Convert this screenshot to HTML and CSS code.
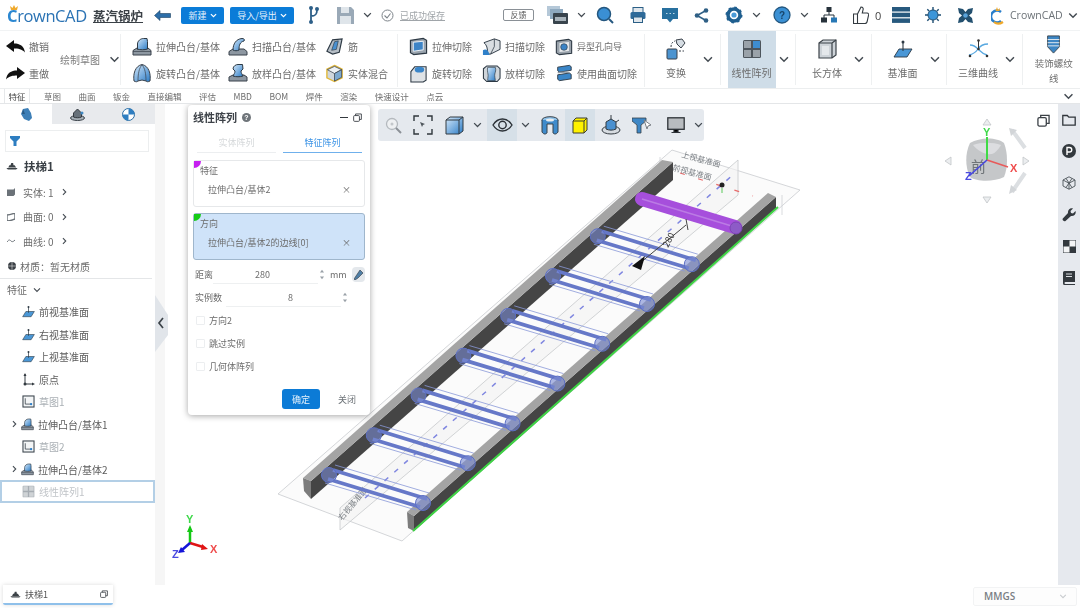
FILE: index.html
```html
<!DOCTYPE html>
<html lang="zh-CN">
<head>
<meta charset="utf-8">
<title>CrownCAD</title>
<link rel="stylesheet" href="styles.css">
</head>
<body>
<svg class="defs" width="0" height="0" aria-hidden="true">
  <defs>
    <linearGradient id="gb" x1="0" y1="0" x2="1" y2="1"><stop offset="0" stop-color="#d5e9fb"/><stop offset="1" stop-color="#2c7cc6"/></linearGradient>
    <symbol id="chev" viewBox="0 0 12 8"><path d="M1.500 1.500 6 6l4.500-4.500" fill="none" stroke="#444b52" stroke-width="1.700"/></symbol>
    <symbol id="chevr" viewBox="0 0 8 12"><path d="M1.500 1.500 6 6l-4.500 4.500" fill="none" stroke="#444b52" stroke-width="1.700"/></symbol>
    <symbol id="i-boss" viewBox="0 0 20 20"><path d="M1 13.500 5 11h11l3 2.500V18H1z" fill="#8d97a1" stroke="#39414a"/><path d="M1 14.500h18" stroke="#39414a" stroke-width=".7"/><path d="M5.500 12V7c0-3 3-5.500 6-5.500h3.500l.5 3V12c-3 1-7 1-10.500 0z" fill="url(#gb)" stroke="#2d3944"/></symbol>
    <symbol id="i-sweep" viewBox="0 0 20 20"><path d="M1 14.500 5 12h11l3 2.500V18H1z" fill="#8d97a1" stroke="#39414a"/><path d="M5 13c0-6 3-11 9-11.500 2 0 3 1 2 2.500-4 1-5 4-5 9-2 1-4 1-6 0z" fill="url(#gb)" stroke="#2d3944"/></symbol>
    <symbol id="i-rib" viewBox="0 0 20 20"><path d="M2 15 8 3l10-1-3 14-7 2z" fill="#b6bec6" stroke="#2d3944" stroke-width="1.200"/><path d="M7 14l3-9 4-1-2 9z" fill="#4a90d0" stroke="#2d3944" stroke-width=".7"/></symbol>
    <symbol id="i-rev" viewBox="0 0 20 20"><path d="M2 18C1 11 3 3 10 1.500 17 3 19 11 18 18c-2 1-3 1-4 0l-4-1-4 1c-1 1-2 1-4 0z" fill="url(#gb)" stroke="#39414a"/><path d="M6 18C6 11 7 5 10 2c3 3 4 9 4 16" fill="none" stroke="#39414a" stroke-width=".7"/></symbol>
    <symbol id="i-loft" viewBox="0 0 20 20"><path d="M1 14 5 12h11l3 2v4H1z" fill="#8d97a1" stroke="#39414a"/><path d="M5 13c1-2 2-3 2-5L5 6c0-3 3-4.500 5-4.500h4.500L15 6l-2 2c0 2 1 3 2 5-3 1-7 1-10 0z" fill="url(#gb)" stroke="#2d3944"/></symbol>
    <symbol id="i-blend" viewBox="0 0 20 20"><path d="M10 1.500 18 5.500v9L10 18.500 2 14.500v-9z" fill="#cfd6dc" stroke="#e2b93b" stroke-width="1.500"/><path d="M10 10 2.500 6 10 2.500 17.500 6z" fill="#eef2f5" stroke="#39414a" stroke-width=".8"/><path d="M10 10v8l7.500-4V6z" fill="#7da9cf" stroke="#39414a" stroke-width=".8"/></symbol>
    <symbol id="i-cut" viewBox="0 0 20 20"><path d="M1.500 3.500 15 1.500l3.500 2V17L5 18.500l-3.500-2z" fill="#9aa4ae" stroke="#2d3944" stroke-width="1.200"/><path d="M4.500 5.500 15 4.500v9l-10.500 1.500z" fill="#3d84c6" stroke="#fff" stroke-width=".9"/></symbol>
    <symbol id="i-scut" viewBox="0 0 20 20"><path d="M2 6 13 2l6 2v9L9 18H6C6 12 5 8 2 6z" fill="#d9dee2" stroke="#2d3944"/><path d="M13 2v8l-4 8" fill="none" stroke="#2d3944" stroke-width=".8"/><path d="M1 14c3-2 6 0 7 5H1z" fill="#2f80c9"/></symbol>
    <symbol id="i-rcut" viewBox="0 0 20 20"><path d="M2 8 6 3h12v14l-3 2H2z" fill="#dfe3e6" stroke="#2d3944" stroke-width="1.100"/><ellipse cx="11" cy="6" rx="5" ry="3" fill="#3b86c9"/></symbol>
    <symbol id="i-lcut" viewBox="0 0 20 20"><path d="M1.500 5 5 2h11l3 3v10l-3 3.500H5L1.500 15z" fill="#cfd5da" stroke="#2d3944" stroke-width="1.100"/><path d="M6 3.500h8c1 3 0 5-.5 7s.5 5 .5 7H6c0-3 .8-5 .3-7S5.500 6 6 3.500z" fill="url(#gb)" stroke="#2d3944" stroke-width=".7"/></symbol>
    <symbol id="i-hole" viewBox="0 0 20 20"><path d="M1.500 3.500 15 1.500l3.500 2V17L5 18.500l-3.500-2z" fill="#99a2ab" stroke="#2d3944" stroke-width="1.200"/><path d="M5 5.500 15.500 4.500v10L5 15.500z" fill="#e6e9ec"/><circle cx="10" cy="10" r="3.700" fill="#3a83c6" stroke="#2d3944" stroke-width=".7"/></symbol>
    <symbol id="i-scut2" viewBox="0 0 20 20"><path d="M3 3.500 16 1.500l2 1.500v4l-13 2-2-1.500z" fill="#3a86c8" stroke="#2d3944"/><path d="M3 12l13-2 2 1.500v5l-13 2L3 17z" fill="#3a86c8" stroke="#2d3944"/><path d="M3 9.500c4 0 9-1 13 0" stroke="#8d97a1" stroke-width="1.500" fill="none"/></symbol>
    <symbol id="i-plane" viewBox="0 0 20 20"><path d="M1 18 6 10h13l-5 8z" fill="#4a97d6" stroke="#2d3944" stroke-width=".9"/><path d="M10 12V3" stroke="#2d3944" stroke-width="1.100"/><circle cx="10" cy="3" r="1.500" fill="#2d3944"/></symbol>
    <symbol id="i-sketch" viewBox="0 0 20 20"><rect x="1.500" y="1.500" width="17" height="17" fill="#f3f5f6" stroke="#37414a" stroke-width="1.600"/><path d="M5 5v9h10" fill="none" stroke="#37414a" stroke-width="1.200"/><circle cx="14" cy="14" r="1.800" fill="#2f80c9"/></symbol>
    <symbol id="i-grid" viewBox="0 0 20 20"><rect x="1" y="1" width="18" height="18" rx="1.500" fill="#4d555c"/><path d="M2 2h7v7H2zM11 11h7v7h-7zM2 11h7v7H2z" fill="#9aa2a9"/><path d="M11 2h7v7h-7z" fill="#3e8dd0"/></symbol>
    <symbol id="i-grid2" viewBox="0 0 20 20"><rect x="1" y="1" width="18" height="18" rx="1.500" fill="#a6acb2"/><path d="M2 2h7v7H2zM11 11h7v7h-7zM2 11h7v7H2zM11 2h7v7h-7z" fill="#cfd3d6"/></symbol>
    <symbol id="i-ship" viewBox="0 0 16 10"><path d="M.5 7.500h15L13.500 9.500h-11zM3 7l1.500-3h7l2 3zM6 4l1-3h2.500l.5 3z" fill="#3c4247"/></symbol>
    <symbol id="i-copy" viewBox="0 0 14 14"><rect x="1" y="4" width="9" height="9" rx="1.500" fill="none" stroke="#3b4046" stroke-width="1.400"/><path d="M4 4V1.500h9V10h-3" fill="none" stroke="#3b4046" stroke-width="1.400"/></symbol>
    <symbol id="i-spin" viewBox="0 0 8 16"><path d="M4 1 7 5H1zM4 15 1 11h6z" fill="#9aa1a8"/></symbol>
    <g id="bar">
      <path d="M333 470 427 499M328 479 420 507" fill="none" stroke="#6678c8" stroke-width="3.800"/>
      <path d="M335 465 429 493M325 483 416 510" fill="none" stroke="#8a98d8" stroke-width="1" opacity=".8"/>
      <circle cx="329" cy="475" r="7.500" fill="#7a8bd2" fill-opacity=".6" stroke="#5c6fc4"/>
      <circle cx="423" cy="503" r="7.500" fill="#7a8bd2" fill-opacity=".6" stroke="#5c6fc4"/>
    </g>
  </defs>
</svg>

<header class="topbar">
  <div class="logo"><span class="logo-c">C</span>rownCAD<svg class="crown" width="8" height="6" viewBox="0 0 8 6"><path d="M1 5 0 1l2.500 2L4 0l1.500 3L8 1 7 5z" fill="#efa92c"/></svg></div>
  <span class="doc-title ml9">蒸汽锅炉</span>
  <svg class="ml11" width="17" height="11" viewBox="0 0 17 11"><path d="M6 0.500 0.500 5.500 6 10.500V7.500h10.500v-4H6z" fill="#2d6ea8" stroke="#1c3f5f" stroke-width=".6"/></svg>
  <button class="btn-blue w43 ml10">新建<svg class="chev-w" width="7" height="5" viewBox="0 0 12 8"><path d="M1.500 1.500 6 6l4.500-4.500" fill="none" stroke="#fff" stroke-width="2"/></svg></button>
  <button class="btn-blue w64 ml6">导入/导出<svg class="chev-w" width="7" height="5" viewBox="0 0 12 8"><path d="M1.500 1.500 6 6l4.500-4.500" fill="none" stroke="#fff" stroke-width="2"/></svg></button>
  <svg class="ml14" width="12" height="20" viewBox="0 0 12 20"><path d="M3 3v14M3 11c5 0 6-2 6-6" fill="none" stroke="#2d5f88" stroke-width="1.800"/><circle cx="3" cy="3" r="2" fill="#2d5f88"/><circle cx="9" cy="4" r="2" fill="#2d5f88"/><circle cx="3" cy="17" r="2" fill="#2d5f88"/></svg>
  <svg class="ml17" width="17" height="17" viewBox="0 0 17 17"><path d="M0 0h14l3 3v14H0z" fill="#9aa9b7"/><path d="M4 0h8v6H4z" fill="#dfe5ea"/><path d="M3 9h11v8H3z" fill="#dfe5ea"/></svg>
  <svg class="ml9" width="9" height="6"><use href="#chev"/></svg>
  <svg class="ml9" width="13" height="13" viewBox="0 0 13 13"><circle cx="6.500" cy="6.500" r="5.500" fill="none" stroke="#7b8288"/><path d="M3.500 6.500 6 9l3.500-4.500" fill="none" stroke="#7b8288" stroke-width="1.100"/></svg>
  <span class="saved ml6">已成功保存</span>
  <span class="feedback ml59">反馈</span>
  <svg class="ml13" width="21" height="19" viewBox="0 0 21 19"><rect x="0" y="0" width="13" height="10" fill="#b5c8d8"/><rect x="3" y="3" width="13" height="10" fill="#8ea9bf"/><rect x="6" y="7" width="15" height="11" rx="1" fill="#39444d"/><rect x="8" y="11" width="11" height="4" fill="#a8b3bb"/></svg>
  <svg class="ml9" width="9" height="6"><use href="#chev"/></svg>
  <svg class="ml10" width="18" height="18" viewBox="0 0 18 18"><circle cx="8" cy="8" r="6.500" fill="#3a8fd4" stroke="#24577f" stroke-width="1.500"/><path d="m13 13 4 4" stroke="#24577f" stroke-width="2"/></svg>
  <svg class="ml16" width="16" height="16" viewBox="0 0 16 16"><rect x="3" y="0.500" width="10" height="5" fill="#dfe6ec" stroke="#2b5f86"/><rect x="0.500" y="5" width="15" height="7" rx="1.500" fill="#2e6a99"/><rect x="3.500" y="10" width="9" height="5.500" fill="#dfe6ec" stroke="#2b5f86"/></svg>
  <svg class="ml16" width="16" height="15" viewBox="0 0 16 15"><rect x="0" y="0" width="16" height="11" fill="#27709f"/><path d="M5 11h6l-3 3.500z" fill="#27709f"/><path d="M4 5.500h1.500M7.500 5.500H9M11 5.500h1.500" stroke="#bcd7e7" stroke-width="1.200"/></svg>
  <svg class="ml16" width="15" height="15" viewBox="0 0 15 15"><path d="M12 2.500 3 7.500l9 5" fill="none" stroke="#2f5f85" stroke-width="1.500"/><circle cx="12" cy="2.500" r="2.300" fill="#2f5f85"/><circle cx="3" cy="7.500" r="2.300" fill="#2f5f85"/><circle cx="12" cy="12.500" r="2.300" fill="#2f5f85"/></svg>
  <svg class="ml16" width="18" height="18" viewBox="0 0 18 18"><circle cx="9" cy="9" r="6" fill="none" stroke="#1f5f8f" stroke-width="3.500"/><circle cx="9" cy="9" r="2.600" fill="#4a9bd8"/><circle cx="9" cy="9" r="7.500" fill="none" stroke="#1f5f8f" stroke-width="2" stroke-dasharray="2.500 3.400"/></svg>
  <svg class="ml9" width="9" height="6"><use href="#chev"/></svg>
  <svg class="ml12" width="18" height="18" viewBox="0 0 18 18"><circle cx="9" cy="9" r="8" fill="#3b90d4" stroke="#24577f" stroke-width="1.300"/></svg>
  <span class="help-q">?</span>
  <svg class="ml9" width="9" height="6"><use href="#chev"/></svg>
  <svg class="ml12" width="16" height="16" viewBox="0 0 16 16"><rect x="5.500" y="0" width="5" height="5" fill="#27323b"/><path d="M8 5v3M3 11V8h10v3" fill="none" stroke="#27323b"/><rect x="0" y="10.500" width="6" height="5" fill="#27323b"/><rect x="10" y="10.500" width="6" height="5" fill="#2878b5"/></svg>
  <svg class="ml16" width="16" height="18" viewBox="0 0 16 18"><path d="M4.500 8 8 1c2 0 2.500 1.500 2 3l-.7 3h4.700c1.500 0 2 1.500 1.500 2.500L14 16c-.3 1-1 1.500-2 1.500H4.500zM.5 8h4v9.500h-4z" fill="#fff" stroke="#333a40" stroke-width="1.100"/></svg>
  <span class="likes">0</span>
  <svg class="ml12" width="18" height="16" viewBox="0 0 18 16"><rect width="18" height="4.500" fill="#27597e"/><rect y="5.700" width="18" height="4.500" fill="#27597e"/><rect y="11.400" width="18" height="4.500" fill="#27597e"/></svg>
  <svg class="ml15" width="16" height="16" viewBox="0 0 16 16"><circle cx="8" cy="8" r="5" fill="#3d96d9" stroke="#1f4f73"/><path d="M8 0v3M8 13v3M0 8h3M13 8h3M2.300 2.300l2 2M11.700 11.700l2 2M2.300 13.700l2-2M11.700 4.300l2-2" stroke="#1f4f73" stroke-width="1.400"/></svg>
  <svg class="ml16" width="17" height="17" viewBox="0 0 17 17"><path d="M1 1l5 1 2.500 3L11 2l5-1-1 5-3 2.500 3 2.500 1 5-5-1-2.500-3L6 15l-5 1 1-5 3-2.500L2 6z" fill="#23506f"/><circle cx="8.500" cy="8.500" r="2.300" fill="#5aa4db"/></svg>
  <svg class="ml17" width="13" height="19" viewBox="0 0 13 19"><path d="M10 6A6 6 0 1 0 10 15" fill="none" stroke="#2a7fcb" stroke-width="2.400"/><path d="M3 16c3 2.500 6 2 9 0" fill="none" stroke="#f0a92b" stroke-width="2.200"/><path d="m6 1 1 3 2-2-.5 3L4.500 5z" fill="#f0a92b"/></svg>
  <span class="brand">CrownCAD</span>
  <svg class="ml6" width="10" height="7"><use href="#chev"/></svg>
</header>

<section class="ribbon">
  <div class="rb-undo">
    <div class="cmd"><svg width="19" height="13" viewBox="0 0 19 13"><path d="M8 0 0 6l8 6V8.500c4 0 8 .5 11 4C18 6 14 3.500 8 3.500z" fill="#111"/></svg><span>撤销</span></div>
    <div class="cmd"><svg width="19" height="13" viewBox="0 0 19 13"><path d="M11 0l8 6-8 6V8.500c-4 0-8 .5-11 4C1 6 5 3.500 11 3.500z" fill="#111"/></svg><span>重做</span></div>
  </div>
  <div class="rb-sketch"><span>绘制草图</span><svg width="11" height="7"><use href="#chev"/></svg></div>
  <div class="rb-grid rb-feat">
    <div class="cmd"><svg width="20" height="20"><use href="#i-boss"/></svg><span>拉伸凸台/基体</span></div>
    <div class="cmd"><svg width="20" height="20"><use href="#i-sweep"/></svg><span>扫描凸台/基体</span></div>
    <div class="cmd"><svg width="19" height="19"><use href="#i-rib"/></svg><span>筋</span></div>
    <div class="cmd"><svg width="20" height="20"><use href="#i-rev"/></svg><span>旋转凸台/基体</span></div>
    <div class="cmd"><svg width="20" height="20"><use href="#i-loft"/></svg><span>放样凸台/基体</span></div>
    <div class="cmd"><svg width="19" height="19"><use href="#i-blend"/></svg><span>实体混合</span></div>
  </div>
  <div class="rb-grid rb-cut">
    <div class="cmd"><svg width="19" height="19"><use href="#i-cut"/></svg><span>拉伸切除</span></div>
    <div class="cmd"><svg width="19" height="19"><use href="#i-scut"/></svg><span>扫描切除</span></div>
    <div class="cmd"><svg width="18" height="18"><use href="#i-hole"/></svg><span class="small">异型孔向导</span></div>
    <div class="cmd"><svg width="19" height="19"><use href="#i-rcut"/></svg><span>旋转切除</span></div>
    <div class="cmd"><svg width="19" height="19"><use href="#i-lcut"/></svg><span>放样切除</span></div>
    <div class="cmd"><svg width="18" height="18"><use href="#i-scut2"/></svg><span>使用曲面切除</span></div>
  </div>
  <div class="rb-big">
    <div class="big-cmd">
      <svg class="big-ico" width="20" height="22" viewBox="0 0 20 22"><path d="M10 2 16 1l3 4-4 5-4-4z" fill="#d6dde3" stroke="#39414a"/><rect x="1" y="11" width="10" height="10" rx="1" fill="#4c94d0" stroke="#39414a"/><path d="M5 9c0-3 1-5 4-6M13 13h5" fill="none" stroke="#39414a" stroke-dasharray="2 1.500"/></svg>
      <span>变换</span>
    </div>
    <svg class="big-chev" width="12" height="7"><use href="#chev"/></svg>
  </div>
  <div class="rb-big">
    <div class="big-cmd active">
      <svg class="big-ico" width="20" height="20"><use href="#i-grid"/></svg>
      <span>线性阵列</span>
    </div>
    <svg class="big-chev" width="12" height="7"><use href="#chev"/></svg>
  </div>
  <div class="rb-big">
    <div class="big-cmd">
      <svg class="big-ico" width="19" height="20" viewBox="0 0 19 20"><path d="M1 4 5 1h13v15l-4 3H1z" fill="#cdd3d8" stroke="#3b4248" stroke-width="1.200"/><path d="M1 4h13v15M14 4l4-3" fill="none" stroke="#3b4248" stroke-width="1.200"/><rect x="4" y="7" width="7" height="9" fill="#e4e8eb"/></svg>
      <span>长方体</span>
    </div>
    <svg class="big-chev" width="12" height="7"><use href="#chev"/></svg>
  </div>
  <div class="rb-big">
    <div class="big-cmd">
      <svg class="big-ico" width="20" height="20"><use href="#i-plane"/></svg>
      <span>基准面</span>
    </div>
    <svg class="big-chev" width="12" height="7"><use href="#chev"/></svg>
  </div>
  <div class="rb-big">
    <div class="big-cmd">
      <svg class="big-ico" width="21" height="20" viewBox="0 0 21 20"><path d="M1 16c5-1 7-3 9-6s5-5 10-5M2 6c5 0 7 3 9 5s4 4 8 5" fill="none" stroke="#58a8e0" stroke-width="1.300"/><path d="M10.500 1v9" stroke="#333"/><circle cx="10.500" cy="1.500" r="1.300" fill="#333"/><circle cx="2" cy="17" r="1.300" fill="#333"/><circle cx="19" cy="17" r="1.300" fill="#333"/><circle cx="10.500" cy="10" r="1.300" fill="#333"/></svg>
      <span>三维曲线</span>
    </div>
    <svg class="big-chev" width="12" height="7"><use href="#chev"/></svg>
  </div>
  <div class="rb-thread">
    <svg width="15" height="19" viewBox="0 0 15 21"><path d="M1 1h13v12l-6.500 7L1 13z" fill="#3d86c4" stroke="#37424b"/><path d="M1 5h13M1 8.500h13M1 12h13" stroke="#dfe8ef" stroke-width="1.100"/></svg>
    <span>装饰螺纹线</span>
  </div>
</section>

<nav class="tabs">
  <span class="tab on">特征</span><span class="tab">草图</span><span class="tab">曲面</span><span class="tab">钣金</span><span class="tab">直接编辑</span><span class="tab">评估</span><span class="tab">MBD</span><span class="tab">BOM</span><span class="tab">焊件</span><span class="tab">渲染</span><span class="tab">快速设计</span><span class="tab">点云</span>
  <svg class="tabs-more" width="11" height="7"><use href="#chev"/></svg>
</nav>

<main class="work">
  <aside class="panel">
    <div class="panel-tabs">
      <span class="ptab on"><svg width="13" height="13" viewBox="0 0 13 13"><path d="M3 1 8 0l3 5 1 5-3 3-5-2-3-5z" fill="#3d7fb7"/><path d="M3 1l2 5-3 0z" fill="#2a5b85"/></svg></span>
      <span class="ptab"><svg width="15" height="14" viewBox="0 0 15 14"><ellipse cx="7.500" cy="11" rx="7" ry="2.500" fill="#a8b1b8" stroke="#3d444b"/><path d="M3.500 10V6l4-4 4 4v4c-2 1-6 1-8 0z" fill="#67717a" stroke="#33393f"/><circle cx="12" cy="6" r="1.500" fill="#3f87c1"/></svg></span>
      <span class="ptab"><svg width="13" height="13" viewBox="0 0 13 13"><circle cx="6.500" cy="6.500" r="6" fill="#fff" stroke="#2b6ea5"/><path d="M6.500 .5a6 6 0 0 1 6 6h-6zM6.500 12.500a6 6 0 0 1-6-6h6z" fill="#2e7ec1"/></svg></span>
    </div>
    <div class="filter"><svg width="10" height="10" viewBox="0 0 10 10"><path d="M0 0h10v2L6.500 5.500V10h-3V5.500L0 2z" fill="#2e7ec1"/></svg></div>
    <div class="part-title"><svg width="12" height="8"><use href="#i-ship"/></svg><span>扶梯1</span></div>
    <div class="prop"><svg class="prop-ico" width="8" height="8" viewBox="0 0 8 8"><path d="M0 1.500h6.500L8 0v6.500L6.500 8H0z" fill="#6b7278"/></svg><span>实体: 1</span><svg class="prop-chev" width="5" height="8"><use href="#chevr"/></svg></div>
    <div class="prop"><svg class="prop-ico" width="8" height="8" viewBox="0 0 8 8"><path d="M0 2c3 0 5-1 8-2v6c-3 1-5 2-8 2z" fill="none" stroke="#6b7278" stroke-width="1.400"/></svg><span>曲面: 0</span><svg class="prop-chev" width="5" height="8"><use href="#chevr"/></svg></div>
    <div class="prop"><svg class="prop-ico" width="8" height="8" viewBox="0 0 8 8"><path d="M0 5c2-3 3-2 4-1s2 1 4-1" fill="none" stroke="#6b7278"/></svg><span>曲线: 0</span><svg class="prop-chev" width="5" height="8"><use href="#chevr"/></svg></div>
    <div class="prop prop-last"><svg class="mat-ico" width="8" height="8" viewBox="0 0 8 8"><circle cx="4" cy="4" r="4" fill="#3b4046"/><path d="M0 4h8M4 0v8" stroke="#fff" stroke-width=".5"/></svg><span>材质：暂无材质</span></div>
    <div class="section-head"><span>特征</span><svg width="8" height="6"><use href="#chev"/></svg></div>
    <ul class="tree">
      <li class="node"><svg width="13" height="13"><use href="#i-plane"/></svg><span>前视基准面</span></li>
      <li class="node"><svg width="13" height="13"><use href="#i-plane"/></svg><span>右视基准面</span></li>
      <li class="node"><svg width="13" height="13"><use href="#i-plane"/></svg><span>上视基准面</span></li>
      <li class="node"><svg width="13" height="13" viewBox="0 0 13 13"><path d="M3 1v10h8" fill="none" stroke="#333a40"/><path d="M3 0 1.500 3h3zM13 11l-3-1.500v3z" fill="#333a40"/><circle cx="3" cy="11" r="1.500" fill="#333a40"/></svg><span>原点</span></li>
      <li class="node dim"><svg width="13" height="13"><use href="#i-sketch"/></svg><span>草图1</span></li>
      <li class="node open"><svg class="twisty" width="5" height="8"><use href="#chevr"/></svg><svg width="13" height="13"><use href="#i-boss"/></svg><span>拉伸凸台/基体1</span></li>
      <li class="node dim"><svg width="13" height="13"><use href="#i-sketch"/></svg><span>草图2</span></li>
      <li class="node open"><svg class="twisty" width="5" height="8"><use href="#chevr"/></svg><svg width="13" height="13"><use href="#i-boss"/></svg><span>拉伸凸台/基体2</span></li>
      <li class="node selected"><svg width="13" height="13"><use href="#i-grid2"/></svg><span>线性阵列1</span></li>
    </ul>
  </aside>

  <div class="canvas">
    <svg class="scene" viewBox="155 104 903 481" width="903" height="481">
      <path d="M155 104h10v481h-10z" fill="#f6f6f6"/>
      <path d="M155 295 168 315V335L155 352z" fill="#e1e5ea"/>
      <path d="M163 318 159 323 163 328" fill="none" stroke="#3c4349" stroke-width="1.700"/>
      <!-- reference planes -->
      <path d="M278 494 402 541 800 190 672 150z" fill="#fbfbfb" stroke="#c9cccf" stroke-width=".8"/>
      <path d="M340 508V530L738 195V160z" fill="#f4f4f4" fill-opacity=".6" stroke="#c6c9cc" stroke-width=".8"/>
      <path d="M660 157V185M782 195V215" stroke="#cfd2d5" stroke-width=".8"/>
      <!-- floor dashes -->
      <path d="M365 498 735 173" stroke="#7f86e0" stroke-width="1.500" stroke-dasharray="5 8"/>
      <path d="M680 173 753 196" stroke="#e86a6a" stroke-width="1.200" stroke-dasharray="5 14"/>
      <circle cx="722" cy="185" r="2.500" fill="#222"/>
      <path d="M722 188v5" stroke="#58c858"/>
      <text class="plane-label" transform="translate(681 157) rotate(15)">上视基准面</text>
      <text class="plane-label" transform="translate(672 170) rotate(15)">前视基准面</text>
      <text class="plane-label" transform="translate(342 521) rotate(-50)">右视基准面</text>
      <!-- left rail -->
      <path d="M311 481 673 162V180L311 499z" fill="#454545"/>
      <path d="M303 478 662 160 673 162 311 481z" fill="#a4a4a4"/>
      <path d="M303 478 311 481V499L304 491z" fill="#7c7c7c"/>
      <!-- right rail -->
      <path d="M414 516 776 197V209L414 531z" fill="#454545"/>
      <path d="M407 512 768 193 776 197 414 516z" fill="#a4a4a4"/>
      <path d="M407 512 414 516V531L408 528z" fill="#7c7c7c"/>
      <path d="M413 531 778 207" stroke="#3fd445" stroke-width="2"/>
      <!-- pattern bars -->
      <use href="#bar"/>
      <use href="#bar" x="44.800" y="-39.800"/>
      <use href="#bar" x="89.600" y="-79.600"/>
      <use href="#bar" x="134.400" y="-119.400"/>
      <use href="#bar" x="179.200" y="-159.200"/>
      <use href="#bar" x="224" y="-199"/>
      <use href="#bar" x="268.800" y="-238.800"/>
      <!-- seed bar -->
      <path d="M642 199 735 227" stroke="#a64fdc" stroke-width="14" stroke-linecap="round"/>
      <path d="M642 199 735 227" stroke="#bb7be4" stroke-width="1.500"/>
      <circle cx="736" cy="228" r="6" fill="#8d5bc7" stroke="#7c45b4"/>
      <!-- dimension -->
      <path d="M640 263 686 225M686 219 688 230" stroke="#444" fill="none"/>
      <path d="M632 266 645 256 641 270z" fill="#111"/>
      <text class="dim-label" transform="translate(668 248) rotate(-62)">280</text>
      <!-- view cube -->
      <path d="M1012 130 1025 148M1025 173 1012 192" stroke="#dcdfe2" stroke-width="4"/>
      <path d="M1009 128 1017 130 1011 136zM1009 194 1017 190 1011 185z" fill="#d2d5d8"/>
      <path d="M987 119 991 125H983zM987 203 983 197H991zM945 161 951 157V165zM1029 161 1023 157V165z" fill="#eceef0" stroke="#c2c5c8" stroke-width=".8"/>
      <path d="M970 143c10-6 27-6 34 0 4 10 4 25 0 34-10 5-27 5-34 0-5-10-5-24 0-34z" fill="#c5c7c9"/>
      <path d="M973 145c8-3 20-3 28 0-3 5-6 8-9 9-7 1-14-3-19-9z" fill="#dcdde0"/>
      <text class="cube-face" x="971" y="172">前</text>
      <path d="M987 160V137" stroke="#3fdb45" stroke-width="2"/>
      <path d="M987 160 1008 167" stroke="#e85a5a" stroke-width="1.500"/>
      <path d="M987 160 969 176" stroke="#4545e0" stroke-width="1.500"/>
      <text class="ax ax-y" x="983" y="136">Y</text>
      <text class="ax ax-x" x="1010" y="172">X</text>
      <text class="ax ax-z" x="965" y="180">Z</text>
      <!-- triad -->
      <path d="M190 543V529" stroke="#14c814" stroke-width="2.500"/><path d="M190 525 187 532H193z" fill="#14c814"/>
      <path d="M190 543 203 547" stroke="#e01414" stroke-width="2.500"/><path d="M208 549 202 544 201 550z" fill="#e01414"/>
      <path d="M190 543 182 550" stroke="#1414d8" stroke-width="2.500"/><path d="M178 553 181 547 185 552z" fill="#1414d8"/>
      <text class="ax ax-y" x="186" y="523">Y</text>
      <text class="ax ax-x" x="210" y="553">X</text>
      <text class="ax ax-z" x="172" y="558">Z</text>
    </svg>

    <svg class="restore" width="13" height="13"><use href="#i-copy"/></svg>

    <div class="viewbar">
      <span class="vb"><svg width="17" height="17" viewBox="0 0 17 17"><circle cx="7" cy="7" r="5.500" fill="#eef0f2" stroke="#b4b9be" stroke-width="1.300"/><path d="m11 11 5 5" stroke="#8c9197" stroke-width="2"/><circle cx="7" cy="7" r="1.500" fill="#c2c6ca"/></svg></span>
      <span class="vb vb-focus"><svg width="20" height="20" viewBox="0 0 20 20"><path d="M1 6V1h5M14 1h5v5M1 14v5h5M19 14v5h-5" fill="none" stroke="#30373d" stroke-width="1.400"/><path d="m7 7 5 2-2 1-1 2z" fill="#50575d"/></svg></span>
      <span class="vb vb-cube"><svg width="19" height="19" viewBox="0 0 19 19"><path d="M1 4 5 1h13v14l-4 3H1z" fill="url(#gb)" stroke="#323a41"/><path d="M1 4h13v14M14 4l4-3" fill="none" stroke="#323a41"/></svg></span>
      <svg class="vb-chev" width="9" height="6"><use href="#chev"/></svg>
      <span class="vb vb-on vb-eye"><svg width="21" height="14" viewBox="0 0 21 14"><path d="M1 7c5-8 14-8 19 0-5 8-14 8-19 0z" fill="none" stroke="#2a3036" stroke-width="1.400"/><circle cx="10.500" cy="7" r="3.700" fill="none" stroke="#2a3036" stroke-width="1.400"/></svg></span>
      <svg class="vb-chev vb-chev2" width="9" height="6"><use href="#chev"/></svg>
      <span class="vb vb-ring"><svg width="18" height="19" viewBox="0 0 18 19"><ellipse cx="9" cy="4" rx="8" ry="3.300" fill="#8cc0e8" stroke="#39424a"/><path d="M1 4v12c2 3 4 2 5 1V8h6v9c1 1 3 2 5-1V4" fill="#3f8bcb" stroke="#39424a"/><ellipse cx="9" cy="4" rx="4" ry="1.500" fill="#e6ebef"/></svg></span>
      <span class="vb vb-on vb-yellow"><svg width="16" height="17" viewBox="0 0 16 17"><path d="M1 4 4 1h11v12l-3 3H1z" fill="#fff200" stroke="#3c3f33"/><path d="M1 4h11v12M12 4l3-3" fill="none" stroke="#3c3f33"/></svg></span>
      <span class="vb vb-stage"><svg width="20" height="20" viewBox="0 0 20 20"><ellipse cx="10" cy="15" rx="9" ry="4" fill="#d6dbe0" stroke="#333a40"/><path d="M5 14V7l5-3 5 3v7c-3 1.500-7 1.500-10 0z" fill="#4a90cf" stroke="#333a40"/><path d="M10 4V0M15 7l3-2" stroke="#333a40"/></svg></span>
      <span class="vb vb-filter"><svg width="20" height="17" viewBox="0 0 20 17"><path d="M0 1h14v3L9 8v8H5V8L0 4z" fill="#3d87c6" stroke="#39424a" stroke-width=".8"/><path d="M12 3 19 8 16 9 15 12z" fill="#fff" stroke="#7b8086"/></svg></span>
      <span class="vb vb-monitor"><svg width="18" height="17" viewBox="0 0 18 17"><rect x="0.800" y="0.800" width="16.400" height="11.500" fill="#b8bcc0" stroke="#2d3237" stroke-width="1.300"/><path d="M7 12.500h4V15H7zM4.500 15.500h9" stroke="#2d3237" stroke-width="1.200"/></svg></span>
      <svg class="vb-chev" width="9" height="6"><use href="#chev"/></svg>
    </div>

    <div class="dialog">
      <div class="dlg-head">
        <h2>线性阵列</h2><span class="dlg-help">?</span>
        <span class="dlg-min"></span>
        <svg width="9" height="9"><use href="#i-copy"/></svg>
      </div>
      <div class="dlg-tabs"><span class="dtab">实体阵列</span><span class="dtab on">特征阵列</span></div>
      <div class="pick pick-feat"><label>特征</label><div class="pick-val"><span>拉伸凸台/基体2</span><i>×</i></div></div>
      <div class="pick pick-dir"><label>方向</label><div class="pick-val"><span>拉伸凸台/基体2的边线[0]</span><i>×</i></div></div>
      <div class="field">
        <label>距离</label><span class="input input-a">280</span><svg width="6" height="11"><use href="#i-spin"/></svg>
        <span class="unit">mm</span>
        <span class="pickbtn"><svg width="9" height="10" viewBox="0 0 9 10"><path d="M6 0l3 3-5 5-3 2-1-1 2-3z" fill="#4f7fa6" stroke="#30383f" stroke-width=".6"/></svg></span>
      </div>
      <div class="field">
        <label>实例数</label><span class="input input-b">8</span><svg width="6" height="11"><use href="#i-spin"/></svg>
      </div>
      <div class="check"><span class="box"></span>方向2</div>
      <div class="check"><span class="box"></span>跳过实例</div>
      <div class="check"><span class="box"></span>几何体阵列</div>
      <div class="dlg-foot"><button class="ok">确定</button><button class="cancel">关闭</button></div>
    </div>
  </div>

  <aside class="rail">
    <svg width="14" height="12" viewBox="0 0 14 12"><path d="M.8 1.500h4.500l1.500 1.700h6.400v8H.8z" fill="none" stroke="#30363b" stroke-width="1.300"/></svg>
    <svg width="14" height="14" viewBox="0 0 14 14"><circle cx="7" cy="7" r="7" fill="#33393e"/><path d="M5 11V3.500h2.500a2 2 0 0 1 0 4.500H5" fill="none" stroke="#fff" stroke-width="1.400"/></svg>
    <svg width="14" height="14" viewBox="0 0 14 14"><path d="M7 .8 13 4v6l-6 3.200L1 10V4zM1 4l6 3.200L13 4M7 7.200v6M4 2.400 10 11.600M10 2.400 4 11.600" fill="none" stroke="#4b5258" stroke-width=".9"/></svg>
    <svg width="14" height="14" viewBox="0 0 14 14"><path d="M13.500 3 11 5.500 9 5 8.500 3 11 .5C8-.5 5.500 2 6 5L.8 10.500c-1 1.500 1.200 3.500 2.700 2.500L9 8c3 .5 5.500-2 4.500-5z" fill="#33393e"/></svg>
    <svg width="13" height="13" viewBox="0 0 13 13"><rect width="13" height="13" fill="#33393e"/><path d="M6.500 0H13v6.500H6.500zM0 6.500h6.500V13H0z" fill="#f4f5f6"/><rect width="13" height="13" fill="none" stroke="#33393e"/></svg>
    <svg width="12" height="14" viewBox="0 0 12 14"><path d="M1.500 0H12v11H2.500a1 1 0 0 0 0 2H12v1H1.500A1.500 1.500 0 0 1 0 12.500V1.500A1.500 1.500 0 0 1 1.500 0z" fill="#33393e"/><path d="M3 3h6M3 5.500h6" stroke="#d9dde0"/></svg>
  </aside>
</main>

<footer class="status">
  <div class="doc-tab"><svg width="11" height="7"><use href="#i-ship"/></svg><span>扶梯1</span><svg class="doc-copy" width="8" height="8"><use href="#i-copy"/></svg></div>
  <div class="units"><span>MMGS</span><svg class="units-chev" width="8" height="5" viewBox="0 0 12 8"><path d="M1.500 1.500 6 6l4.500-4.500" fill="none" stroke="#c9cccf" stroke-width="1.700"/></svg></div>
</footer>
</body>
</html>
```

FILE: styles.css
```css
* { box-sizing: border-box; }
html, body { margin: 0; padding: 0; }
body {
  width: 1080px; height: 608px; overflow: hidden; background: #fff; color: #555;
  display: flex; flex-direction: column;
  font-family: "Noto Sans CJK SC", "Noto Sans", sans-serif; font-size: 10px;
  filter: blur(.35px);
}
svg { display: block; flex: none; }
.defs { height: 0; }
button { font: inherit; border: 0; padding: 0; }
ul { list-style: none; margin: 0; padding: 0; }

.ml6 { margin-left: 6px; } .ml9 { margin-left: 9px; } .ml10 { margin-left: 10px; }
.ml11 { margin-left: 11px; } .ml12 { margin-left: 12px; } .ml13 { margin-left: 13px; }
.ml14 { margin-left: 14px; } .ml15 { margin-left: 15px; } .ml16 { margin-left: 16px; }
.ml17 { margin-left: 17px; } .ml59 { margin-left: 59px; }

/* Top bar */
.topbar { height: 31px; flex: none; display: flex; align-items: center; padding-left: 7px; border-bottom: 1px solid #f1f3f4; }
.logo { position: relative; width: 77px; font: 400 16.500px "Open Sans", sans-serif; color: #2b73b4; letter-spacing: -.4px; white-space: nowrap; }
.logo-c { color: #2b87d1; font-weight: 700; }
.crown { position: absolute; left: 3px; top: 1px; }
.doc-title { width: 50px; font-size: 12.500px; font-weight: 700; color: #3a4046; text-decoration: underline; white-space: nowrap; }
.btn-blue { height: 17px; background: #0b7cd8; color: #e6f2fc; border-radius: 2px; font-size: 9px; display: flex; align-items: center; justify-content: center; gap: 3px; }
.w43 { width: 43px; } .w64 { width: 64px; }
.saved { font-size: 9px; color: #a0a5a9; text-decoration: underline; width: 44px; white-space: nowrap; }
.feedback { width: 31px; height: 12px; border: 1px solid #8a9096; border-radius: 2px; font-size: 8px; line-height: 10px; text-align: center; color: #555; }
.help-q { width: 0; margin-left: -12px; margin-right: 12px; color: #17456b; font: 700 10px "Liberation Sans", sans-serif; }
.likes { margin-left: 6px; width: 5px; font: 11px "Open Sans", sans-serif; color: #444; }
.brand { margin-left: 6px; width: 52px; font: 10.500px "Open Sans", sans-serif; color: #6c7277; white-space: nowrap; }

/* Ribbon */
.ribbon { height: 57px; flex: none; display: flex; }
.cmd { display: flex; align-items: center; gap: 4px; white-space: nowrap; color: #6c6c6c; }
.cmd .small { font-size: 9px; }
.rb-undo { width: 56px; padding-left: 6px; display: flex; flex-direction: column; justify-content: space-between; padding-block: 8px 7px; }
.rb-sketch { width: 65px; padding-left: 4px; display: flex; align-items: center; gap: 9px; border-right: 1px solid #eef0f1; margin-block: 3px; white-space: nowrap; color: #7c7c7c; }
.rb-grid { display: grid; align-items: center; grid-template-rows: 1fr 1fr; padding-block: 0 1px; row-gap: 1px; border-right: 1px solid #eef0f1; margin-block: 3px 1px; }
.rb-feat { width: 277px; padding-left: 11px; grid-template-columns: 96px 97px 1fr; }
.rb-cut { width: 247px; padding-left: 11px; grid-template-columns: 73px 73px 1fr; }
.rb-big { width: 75.500px; padding-left: 7px; display: flex; align-items: center; border-right: 1px solid #eef0f1; margin-block: 3px; }
.big-cmd { width: 48px; height: 57px; margin-block: -3px; display: flex; flex-direction: column; align-items: center; padding-top: 7px; color: #6c6c6c; white-space: nowrap; }
.big-cmd.active { background: #cfdde8; }
.big-ico { height: 22px; margin-bottom: 5px; }
.big-chev { margin-left: 2px; }
.rb-thread { flex: 1; display: flex; flex-direction: column; align-items: center; color: #6c6c6c; padding: 4px 4px 0 9px; line-height: 15px; text-align: center; font-size: 9.500px; }
.rb-thread span { width: 40px; }
.rb-thread svg { margin-bottom: 2px; }

/* Module tabs */
.tabs { height: 16px; flex: none; position: relative; display: flex; align-items: stretch; padding-left: 4px; gap: 17.500px; font-size: 8.500px; color: #6c6c6c; border-top: 1px solid #eceeef; border-bottom: 1px solid #e4e6e8; line-height: 14px; }
.tab { white-space: nowrap; }
.tab.on { width: 26px; margin-right: -3.500px; text-align: center; border-right: 1px solid #e6e8ea; border-left: 1px solid #e6e8ea; color: #444; }
.tabs-more { position: absolute; right: 6px; top: 4px; }

/* Workspace */
.work { flex: 1; min-height: 0; display: flex; }
.panel { width: 155px; flex: none; display: flex; flex-direction: column; color: #555; }
.panel-tabs { height: 20px; flex: none; display: flex; background: #e8eaed; }
.ptab { width: 51px; display: flex; align-items: center; justify-content: center; }
.ptab.on { background: #fff; width: 52px; }
.filter { height: 22px; margin: 6px 6px 0 5px; border: 1px solid #eceeef; display: flex; align-items: center; padding-left: 4px; flex: none; }
.part-title { height: 28px; flex: none; padding-left: 6px; display: flex; align-items: center; gap: 6px; font-size: 11.500px; font-weight: 700; color: #3a4046; }
.prop { height: 24.600px; flex: none; padding-left: 7px; display: flex; align-items: center; color: #6c6c6c; }
.prop-ico { margin-right: 8px; }
.prop-chev { margin-left: 8px; }
.prop-last { padding-left: 8px; }
.mat-ico { margin-right: 4px; }
.section-head { height: 22px; flex: none; margin-right: 3px; border-top: 1px solid #e4e6e8; padding-left: 7px; display: flex; align-items: center; gap: 6px; color: #6c6c6c; }
.tree { display: flex; flex-direction: column; }
.node { height: 22.500px; display: flex; align-items: center; gap: 4px; padding-left: 22px; color: #5c5c5c; white-space: nowrap; }
.node.dim { color: #aab0b5; }
.node.open { padding-left: 12px; }
.node.selected { color: #c0c4c8; border: 2px solid #b3cfe6; padding-left: 20px; }

.canvas { flex: 1; position: relative; overflow: hidden; background: #fff; }
.scene { position: absolute; inset: 0; }
.plane-label { font-size: 8px; fill: #7c8186; }
.dim-label { font-size: 9px; fill: #333; }
.cube-face { font-size: 15px; fill: #6f7478; }
.ax { font: 700 11px "Liberation Sans", sans-serif; }
.ax-y { fill: #3ed84a; } .ax-x { fill: #ef4d4d; } .ax-z { fill: #4a4ae0; }
.restore { position: absolute; left: 882px; top: 10px; }

.viewbar { position: absolute; left: 223px; top: 5px; width: 326px; height: 32px; background: #e5e9ee; border-radius: 3px; display: flex; align-items: center; }
.vb { display: flex; align-items: center; justify-content: center; height: 32px; }
.vb:first-child { margin-left: 7px; }
.vb-focus { margin-left: 11px; }
.vb-cube { margin-left: 12px; }
.vb-chev { margin-left: 9px; }
.vb-on { background: #d6e0e8; }
.vb-eye { width: 30px; margin-left: 5px; }
.vb-chev2 { margin-left: 4px; }
.vb-ring { margin-left: 11px; }
.vb-yellow { width: 30px; margin-left: 6px; }
.vb-stage { margin-left: 6px; }
.vb-filter { margin-left: 11px; }
.vb-monitor { margin-left: 15px; }

/* Dialog */
.dialog { position: absolute; left: 33px; top: 1px; width: 182px; height: 310px; background: #fff; border-radius: 4px; box-shadow: 0 1px 6px rgba(0,0,0,.35); padding: 0 5px; font-size: 9px; color: #6c6c6c; }
.dlg-head { height: 24px; display: flex; align-items: center; }
h2 { margin: 0; font-size: 11px; font-weight: 700; color: #3d4248; }
.dlg-help { margin-left: 5px; width: 9px; height: 9px; border-radius: 50%; background: #6f757a; color: #fff; font: 700 7px/9px "Liberation Sans", sans-serif; text-align: center; }
.dlg-min { margin-left: auto; width: 8px; height: 1px; background: #33393e; margin-right: 5px; }
.dlg-head svg { margin-right: 3px; }
.dlg-tabs { display: flex; height: 24px; gap: 7px; padding: 0 3px 0 4px; }
.dtab { flex: 1; text-align: center; line-height: 28px; height: 24px; color: #d5d8da; border-bottom: 1px solid #eceef0; }
.dtab.on { color: #3f95e6; border-bottom-color: #6fb0ec; }
.pick { position: relative; margin-top: 7px; height: 47px; border: 1px solid #e6e8ea; border-radius: 3px; padding: 3px 0 0 6px; }
.pick-dir { margin-top: 6px; background: #cfe3f9; border-color: #9fb6cc; }
.pick::before { content: ""; position: absolute; left: 0; top: 0; width: 7px; height: 7px; border-bottom-right-radius: 7px; }
.pick-feat::before { background: #c61ff0; }
.pick-dir::before { background: #16cc16; }
.pick label { display: block; height: 13px; line-height: 13px; }
.pick-val { display: flex; justify-content: space-between; margin: 6px 13px 0 8px; }
.pick-val i { font-style: normal; font-size: 9px; color: #666; }
.field { position: relative; display: flex; align-items: center; height: 23px; padding-left: 2px; white-space: nowrap; }
.field label { flex: none; }
.pick-dir + .field { margin-top: 3px; }
.input { border-bottom: 1px solid #eef0f1; height: 19px; line-height: 19px; text-align: left; flex: none; }
.input-a { margin-left: 0; width: 105px; padding-left: 42px; }
.input-b { margin-left: 4px; width: 115px; padding-left: 62px; }
.field svg { margin-left: 1px; }
.unit { margin-left: 5px; font-size: 9px; }
.pickbtn { margin-left: 5px; width: 17px; height: 15px; border-radius: 4px; background: #e4e8ec; display: flex; align-items: center; justify-content: center; }
.pickbtn svg { margin: 0; }
.check { display: flex; align-items: center; height: 23px; padding-left: 3px; gap: 4px; }
.box { width: 9px; height: 9px; border: 1px solid #eceef0; border-radius: 1px; }
.dlg-foot { display: flex; align-items: center; margin-top: 11px; padding-left: 89px; }
.ok { width: 38px; height: 20px; background: #0c7bd6; color: #e6f2fc; border-radius: 3px; font-size: 9px; }
.cancel { background: none; color: #6c7277; margin-left: 18px; font-size: 9px; }

/* Right rail */
.rail { width: 22px; flex: none; background: #e6e9ee; display: flex; flex-direction: column; align-items: center; padding-top: 10px; gap: 18px; }

/* Status */
.status { height: 23px; flex: none; display: flex; justify-content: space-between; padding: 0 3px 0 3px; position: relative; }
.doc-tab { width: 110px; height: 20px; display: flex; align-items: center; gap: 4px; padding-left: 7px; font-size: 9px; color: #555; border-bottom: 2px solid #8fc0ea; border-radius: 0 0 2px 2px; box-shadow: 0 0 4px rgba(0,0,0,.15); }
.doc-copy { margin-left: auto; margin-right: 5px; }
.units { width: 104px; height: 19px; margin-top: 2px; background: #fdfdfd; border: 1px solid #f2f3f4; border-radius: 2px; font: 600 10px/17px "Open Sans", sans-serif; color: #7a7f84; padding: 0 9px 0 10px; display: flex; align-items: center; justify-content: space-between; }
```
